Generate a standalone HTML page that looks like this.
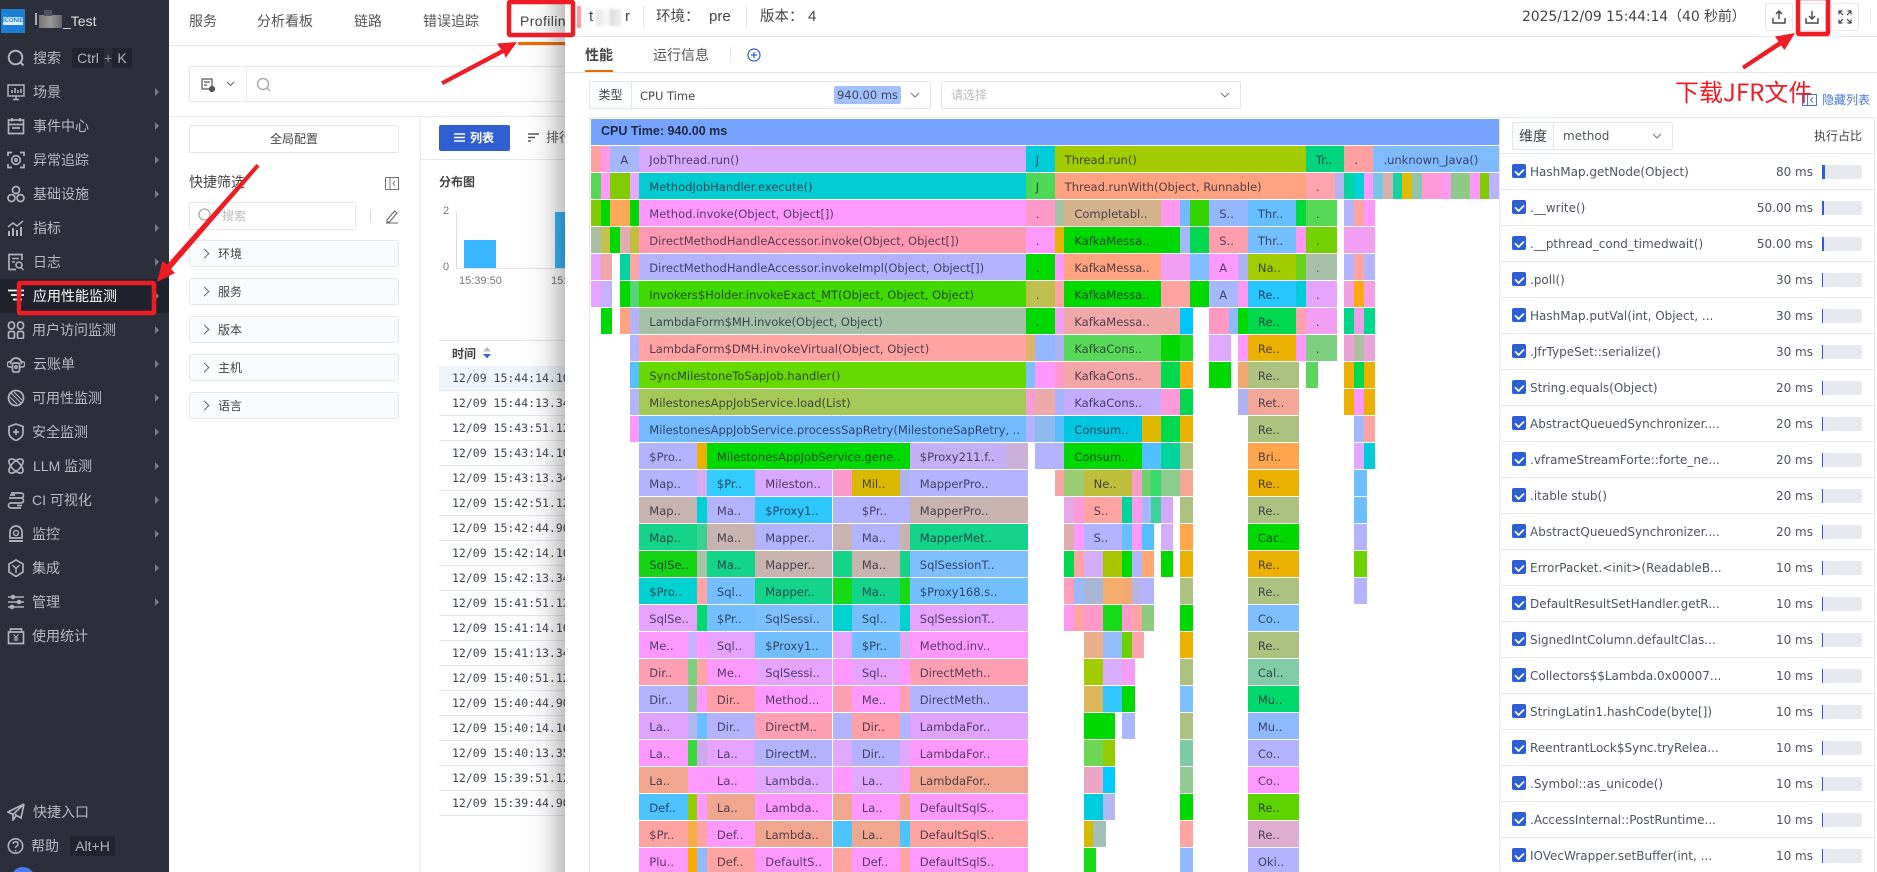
<!DOCTYPE html>
<html lang="zh"><head><meta charset="utf-8"><title>Profiling</title>
<style>
*{box-sizing:border-box}
html,body{margin:0;padding:0;width:1877px;height:872px;overflow:hidden;background:#fff}
body{position:relative;font-family:"Liberation Sans","Noto Sans CJK SC",sans-serif;font-size:12px;color:#444}
.a{position:absolute}
#side{left:0;top:0;width:169px;height:872px;background:#2c2e3a;color:#b8bac0;font-size:14px}
.m{position:absolute;left:0;width:169px;height:20px;line-height:20px;white-space:nowrap}
.m span{position:absolute;left:33px;top:0}
.m svg{position:absolute;left:7px;top:1px;width:18px;height:18px;fill:none;stroke:#b0b2b8;stroke-width:1.5}
.m u{position:absolute;left:155px;top:6px;border-left:4px solid #7a7c84;border-top:4px solid transparent;border-bottom:4px solid transparent}
.k{position:absolute;top:48px;height:20px;line-height:20px;background:#22242d;text-align:center;color:#b0b2b8}
.t{position:absolute;top:12px;font-size:14px;line-height:18px;color:#555}
.fb{position:absolute;left:189px;width:210px;height:27px;background:#fafbfc;border:1px solid #e6e7ec;border-radius:3px;font-size:12px;line-height:26px;padding-left:28px;color:#444}
.fb:before{content:"";position:absolute;left:11px;top:9px;width:6px;height:6px;border-top:1px solid #666;border-right:1px solid #666;transform:rotate(45deg)}
.tr{position:absolute;left:439px;width:126px;height:25px;border-bottom:1px solid #e6e7ec;font:11.5px/25px "DejaVu Sans Mono",monospace;color:#3f4450;padding-left:13px;white-space:nowrap;overflow:hidden}
#dr{left:565px;top:0;width:1312px;height:872px;background:#fff}
.r{position:absolute;left:591px;height:26px;width:908px}
.r b{position:absolute;top:0;height:26px;left:calc(var(--s)*9.66px);width:calc(var(--l)*9.66px);overflow:hidden;white-space:nowrap;padding-left:10px;font:400 11.5px/28px "DejaVu Sans",sans-serif;color:rgba(25,25,50,.75)}
.l{position:absolute;left:1500px;width:374px;height:36px;border-top:1px solid #e8e9ee}
.l em{position:absolute;left:12px;top:10px;width:14px;height:14px;background:#2d5fd3;border-radius:2px}
.l em:after{content:"";position:absolute;left:4px;top:2px;width:5px;height:8px;border-right:2px solid #fff;border-bottom:2px solid #fff;transform:rotate(45deg) scale(.85)}
.l span{position:absolute;left:30px;top:0;font:12px/37px "DejaVu Sans",sans-serif;color:#50535f;white-space:nowrap}
.l s{position:absolute;right:61px;top:0;text-decoration:none;font:12px/37px "DejaVu Sans",sans-serif;color:#50535f}
.l i{position:absolute;left:322px;top:11px;width:40px;height:14px;background:#e8e9ee;border-radius:2px}
.l i:before{content:"";position:absolute;left:0;top:0;height:14px;width:var(--w,1px);background:#2d5fd3}
.ib{position:absolute;top:3px;width:28px;height:28px;border:1px solid #e8e9ee;border-radius:2px}
.ib svg{position:absolute;left:6px;top:6px;width:14px;height:14px;fill:none;stroke:#444;stroke-width:1.4}
</style></head><body>

<!-- main page -->
<div class="a" style="left:169px;top:45px;width:400px;height:1px;background:#e8e9ee"></div>
<div class="t" style="left:189px">服务</div><div class="t" style="left:257px">分析看板</div><div class="t" style="left:354px">链路</div><div class="t" style="left:423px">错误追踪</div><div class="t" style="left:520px;color:#444;font-size:14px;letter-spacing:.4px">Profiling</div>
<div class="a" style="left:518px;top:42px;width:50px;height:3px;background:#f56a00"></div>
<div class="a" style="left:189px;top:66px;width:390px;height:36px;border:1px solid #e8e9ee;border-radius:2px"></div>
<div class="a" style="left:246px;top:66px;width:1px;height:36px;background:#e8e9ee"></div>
<svg class="a" style="left:200px;top:78px" width="16" height="15" fill="none" stroke="#555" stroke-width="1.2"><path d="M2 1h10v10H2zM4 4h6M4 7h3"/><circle cx="12" cy="11" r="2.5" fill="#555"/></svg>
<svg class="a" style="left:226px;top:81px" width="9" height="6" fill="none" stroke="#666"><path d="M1 1l3.5 3.5L8 1"/></svg>
<svg class="a" style="left:256px;top:77px" width="16" height="16" fill="none" stroke="#aaa" stroke-width="1.4"><circle cx="7" cy="7" r="5.5"/><path d="M11 11l3 3"/></svg>
<div class="a" style="left:169px;top:116px;width:400px;height:1px;background:#e8e9ee"></div>
<div class="a" style="left:420px;top:117px;width:1px;height:755px;background:#e8e9ee"></div>
<div class="a" style="left:189px;top:125px;width:210px;height:28px;border:1px solid #e6e7ec;border-radius:2px;text-align:center;line-height:26px;color:#444">全局配置</div>
<div class="a" style="left:189px;top:173px;font-size:14px;line-height:18px;color:#444">快捷筛选</div>
<svg class="a" style="left:385px;top:177px" width="14" height="13" fill="none" stroke="#777"><path d="M.5.5h13v12H.5zM5 .5v12M10 4L8 6.500l2 2.500"/></svg>
<div class="a" style="left:189px;top:202px;width:167px;height:28px;border:1px solid #e6e7ec;border-radius:2px"></div>
<svg class="a" style="left:198px;top:208px" width="15" height="15" fill="none" stroke="#aaa" stroke-width="1.3"><circle cx="6.500" cy="6.500" r="5.500"/><path d="M10.500 10.500l3 3"/></svg>
<div class="a" style="left:222px;top:208px;color:#bbb;line-height:16px">搜索</div>
<div class="a" style="left:370px;top:210px;width:1px;height:12px;background:#ddd"></div>
<svg class="a" style="left:385px;top:209px" width="14" height="15" fill="none" stroke="#666" stroke-width="1.1"><path d="M2 11L9.500 2l2.500 2-7.500 9H2zM1 14h12"/></svg>
<div class="fb" style="top:240px">环境</div><div class="fb" style="top:278px">服务</div><div class="fb" style="top:316px">版本</div><div class="fb" style="top:354px">主机</div><div class="fb" style="top:392px">语言</div>

<div class="a" style="left:439px;top:125px;width:71px;height:26px;background:#2f5fd0;border-radius:2px;color:#fff;font-weight:bold;line-height:26px;padding-left:31px">列表</div>
<svg class="a" style="left:454px;top:132px" width="11" height="11" stroke="#fff" stroke-width="1.4"><path d="M0 2h11M0 5.500h11M0 9h11"/></svg>
<svg class="a" style="left:528px;top:133px" width="12" height="10" stroke="#555" stroke-width="1.6"><path d="M0 1h11M0 4.500h7M0 8h3"/></svg>
<div class="a" style="left:546px;top:130px;line-height:16px;color:#555;font-size:13px">排行</div>
<div class="a" style="left:421px;top:159px;width:148px;height:1px;background:#e8e9ee"></div>
<div class="a" style="left:439px;top:174px;font-weight:bold;line-height:16px;color:#444">分布图</div>
<div class="a" style="left:443px;top:204px;font-size:11px;line-height:14px;color:#777">2</div>
<div class="a" style="left:443px;top:260px;font-size:11px;line-height:14px;color:#777">0</div>
<div class="a" style="left:456px;top:212px;width:1px;height:56px;background:#ddd"></div>
<div class="a" style="left:456px;top:268px;width:110px;height:1px;background:#e6e6ea"></div>
<div class="a" style="left:464px;top:240px;width:32px;height:28px;background:#38b6ff"></div>
<div class="a" style="left:555px;top:212px;width:14px;height:56px;background:#38b6ff"></div>
<div class="a" style="left:459px;top:274px;font-size:11px;line-height:14px;color:#777">15:39:50</div>
<div class="a" style="left:551px;top:274px;font-size:11px;line-height:14px;color:#777">15:</div>
<div class="a" style="left:439px;top:340px;width:130px;height:1px;background:#e6e7ec"></div>
<div class="a" style="left:452px;top:346px;font-weight:bold;line-height:16px;color:#444">时间</div>
<svg class="a" style="left:483px;top:347px" width="8" height="12"><path d="M4 0l4 4.500H0z" fill="#bbb"/><path d="M4 11.500l4-4.500H0z" fill="#3c64d8"/></svg>
<div class="tr" style="top:366px;background:#eff5fb">12/09 15:44:14.105</div>
<div class="tr" style="top:391px">12/09 15:44:13.345</div>
<div class="tr" style="top:416px">12/09 15:43:51.125</div>
<div class="tr" style="top:441px">12/09 15:43:14.105</div>
<div class="tr" style="top:466px">12/09 15:43:13.345</div>
<div class="tr" style="top:491px">12/09 15:42:51.125</div>
<div class="tr" style="top:516px">12/09 15:42:44.905</div>
<div class="tr" style="top:541px">12/09 15:42:14.105</div>
<div class="tr" style="top:566px">12/09 15:42:13.345</div>
<div class="tr" style="top:591px">12/09 15:41:51.125</div>
<div class="tr" style="top:616px">12/09 15:41:14.105</div>
<div class="tr" style="top:641px">12/09 15:41:13.345</div>
<div class="tr" style="top:666px">12/09 15:40:51.125</div>
<div class="tr" style="top:691px">12/09 15:40:44.905</div>
<div class="tr" style="top:716px">12/09 15:40:14.105</div>
<div class="tr" style="top:741px">12/09 15:40:13.355</div>
<div class="tr" style="top:766px">12/09 15:39:51.125</div>
<div class="tr" style="top:791px">12/09 15:39:44.905</div>
<div class="a" style="left:525px;top:0;width:40px;height:872px;background:linear-gradient(to right,rgba(0,0,0,0),rgba(0,0,0,.05) 50%,rgba(0,0,0,.24))"></div>

<!-- sidebar -->
<div id="side" class="a">
<div class="a" style="left:1px;top:9px;width:24px;height:24px;background:#1b80d4"></div>
<div class="a" style="left:3px;top:17px;width:20px;height:8px;background:#dcefff;color:#1b80d4;font:bold 6px/8px 'Liberation Sans';text-align:center">ICONIE</div>
<div class="a" style="left:35px;top:13px;width:2px;height:12px;background:#aaa"></div>
<div class="a" style="left:39px;top:15px;width:23px;height:13px;background:linear-gradient(90deg,#777 0,#999 50%,#666);"></div>
<div class="a" style="left:44px;top:10px;width:8px;height:6px;background:#52525e"></div>
<div class="a" style="left:63px;top:12px;color:#ddd;font-size:14px;line-height:18px">_Test</div>

<div class="m" style="top:48px"><svg viewBox="0 0 18 18"><circle cx="8.500" cy="8.500" r="6.800" stroke-width="2"/><path d="M13.500 13.500l3 3" stroke-width="2"/></svg><span>搜索</span></div>
<div class="k" style="left:72px;width:32px">Ctrl</div><div class="a" style="left:104px;top:48px;line-height:20px;color:#8a8c94">+</div><div class="k" style="left:112px;width:20px">K</div>

<div class="m" style="top:82px"><svg viewBox="0 0 18 18"><path d="M1 2h16v11H1zM6 16.500h6M9 13v3"/><path d="M5 10V7M8 10V5M11 10V7M14 10V6" stroke-width="1.600"/></svg><span>场景</span><u></u></div>
<div class="m" style="top:116px"><svg viewBox="0 0 18 18"><path d="M1.500 3h15v13.500h-15zM5 1v3.500M13 1v3.500M1.500 7.500h15M5 11h8" stroke-width="1.700"/></svg><span>事件中心</span><u></u></div>
<div class="m" style="top:150px"><svg viewBox="0 0 18 18"><path d="M1 5V1.500h4M13 1.500h4V5M17 13v3.500h-4M5 16.500H1V13" stroke-width="1.700"/><circle cx="9" cy="9" r="4.300" stroke-width="1.700"/><circle cx="9" cy="9" r="1.200"/></svg><span>异常追踪</span><u></u></div>
<div class="m" style="top:184px"><svg viewBox="0 0 18 18"><circle cx="9" cy="5" r="3.500" stroke-width="1.700"/><circle cx="4.500" cy="13" r="3.500" stroke-width="1.700"/><circle cx="13.500" cy="13" r="3.500" stroke-width="1.700"/></svg><span>基础设施</span><u></u></div>
<div class="m" style="top:218px"><svg viewBox="0 0 18 18"><path d="M2 17v-5M6 17V9M10 17v-6M14 17V8" stroke-width="2"/><path d="M1 8l5-4 4 3 6-5" /></svg><span>指标</span><u></u></div>
<div class="m" style="top:252px"><svg viewBox="0 0 18 18"><path d="M15 7V1.500H2v15h7" stroke-width="1.700"/><path d="M5 5.500h7M5 9h3"/><circle cx="12" cy="12" r="3" stroke-width="1.600"/><path d="M14 14.500l2.500 2.500"/></svg><span>日志</span><u></u></div>

<div class="a" style="left:0;top:279px;width:169px;height:34px;background:#20222b"></div>
<div class="m" style="top:286px;color:#fff"><svg viewBox="0 0 18 18" style="stroke:#fff"><path d="M1 3.500h16M4 8h6M13 8h4M6 12.500h4M12 12.500h3M10 16h3M11 4v12" stroke-width="1.800"/></svg><span>应用性能监测</span><u style="border-left-color:#888"></u></div>

<div class="m" style="top:320px"><svg viewBox="0 0 18 18"><rect x="1.500" y="1" width="6" height="7" rx="3" stroke-width="1.700"/><rect x="10.500" y="1" width="6" height="7" rx="3" stroke-width="1.700"/><rect x="1.500" y="10.500" width="6" height="7" rx="1.500" stroke-width="1.700"/><rect x="10.500" y="10.500" width="6" height="7" rx="1.500" stroke-width="1.700"/></svg><span style="left:32px">用户访问监测</span><u></u></div>
<div class="m" style="top:354px"><svg viewBox="0 0 18 18"><path d="M3.500 9a5.500 6 0 0 1 11 0" stroke-width="1.700"/><path d="M3.500 6.500H3a2.800 2.800 0 0 0 0 5.600h2M14.500 6.500h.5a2.800 2.800 0 0 1 0 5.600h-2" stroke-width="1.600"/><rect x="5.500" y="8" width="7" height="9" rx="1.500" stroke-width="1.700"/><circle cx="9" cy="12" r="1.200"/></svg><span>云账单</span><u></u></div>
<div class="m" style="top:388px"><svg viewBox="0 0 18 18"><circle cx="9" cy="9" r="7.500" stroke-width="1.800"/><path d="M4 4l10 10M3 8l7 7M7 3l8 8" stroke-width="1.200"/></svg><span style="left:32px">可用性监测</span><u></u></div>
<div class="m" style="top:422px"><svg viewBox="0 0 18 18"><path d="M9 1l7 2.500V10c0 3.500-3.500 6-7 7.500C5.500 16 2 13.500 2 10V3.500z" stroke-width="1.700"/><path d="M6 9h6M9 6v6" stroke-width="1.700"/></svg><span style="left:32px">安全监测</span><u></u></div>
<div class="m" style="top:456px"><svg viewBox="0 0 18 18"><ellipse cx="9" cy="9" rx="9" ry="4.300" transform="rotate(45 9 9)" stroke-width="1.700"/><ellipse cx="9" cy="9" rx="9" ry="4.300" transform="rotate(-45 9 9)" stroke-width="1.700"/></svg><span>LLM 监测</span><u></u></div>
<div class="m" style="top:490px"><svg viewBox="0 0 18 18"><path d="M4 2h10a2.500 2.500 0 0 1 0 5H4M2 7h12M14 7a2.500 2.500 0 0 1 0 5H4a2.500 2.500 0 0 0 0 5h10" stroke-width="1.700"/><path d="M3 4h5M10 14.500h5" stroke-width="1.700"/></svg><span style="left:32px">CI 可视化</span><u></u></div>
<div class="m" style="top:524px"><svg viewBox="0 0 18 18"><path d="M3 13V7a6 6 0 0 1 12 0v6z" stroke-width="1.700"/><circle cx="9" cy="8" r="2.500" stroke-width="1.400"/><path d="M2 16h14" stroke-width="2"/></svg><span style="left:32px">监控</span><u></u></div>
<div class="m" style="top:558px"><svg viewBox="0 0 18 18"><path d="M9 1l7 4v8l-7 4.500L2 13V5z" stroke-width="1.700"/><path d="M5.500 6L9 9.500 12.500 6M9 9.500V14" stroke-width="1.500"/></svg><span style="left:32px">集成</span><u></u></div>
<div class="m" style="top:592px"><svg viewBox="0 0 18 18"><path d="M1 4h16M1 9h16M1 14h16" stroke-width="1.500"/><circle cx="6" cy="4" r="1.500" fill="#b0b2b8"/><circle cx="12" cy="9" r="1.500" fill="#b0b2b8"/><circle cx="5" cy="14" r="1.500" fill="#b0b2b8"/></svg><span style="left:32px">管理</span><u></u></div>
<div class="m" style="top:626px"><svg viewBox="0 0 18 18"><path d="M1.500 5h15v11.500h-15zM3.500 5V2h11v3" stroke-width="1.700"/><path d="M6.500 7.500L9 10l2.500-2.500M9 10v4M6.500 11h5M6.500 13h5" stroke-width="1"/></svg><span style="left:32px">使用统计</span></div>

<div class="m" style="top:802px"><svg viewBox="0 0 18 18"><path d="M17 1L1 9l5 2.500L17 1zM17 1l-3 14-6-3.500M6 11.500V17l3-4" stroke-width="1.700"/></svg><span>快捷入口</span></div>
<div class="m" style="top:836px"><svg viewBox="0 0 18 18"><circle cx="8.500" cy="9" r="7.200" stroke-width="1.600"/><path d="M6.200 7a2.400 2.400 0 1 1 3.600 2.100c-.9.500-1.300 1-1.300 2" stroke-width="1.500"/><path d="M8.500 13v1.400" stroke-width="1.500"/></svg><span style="left:31px">帮助</span></div>
<div class="k" style="left:70px;top:836px;width:45px">Alt+H</div>
<div class="a" style="left:11px;top:867px;width:24px;height:24px;border-radius:12px;background:#4a7cf0"></div>
</div>

<!-- drawer -->
<div id="dr" class="a"></div>
<div class="a" style="left:577px;top:6px;width:4px;height:22px;background:#ff9e9e"></div>
<div class="a" style="left:589px;top:8px;font-size:15px;line-height:18px;color:#444">t</div>
<div class="a" style="left:596px;top:9px;width:26px;height:17px;background:linear-gradient(90deg,#e6e6e6,#fafafa 45%,#dedede 60%,#f3f3f3);filter:blur(1px)"></div>
<div class="a" style="left:625px;top:8px;font-size:15px;line-height:18px;color:#444">r</div>
<div class="a" style="left:643px;top:6px;width:1px;height:22px;background:#e6e7ec"></div>
<div class="a" style="left:656px;top:8px;font-size:14.500px;line-height:18px;color:#444">环境：</div>
<div class="a" style="left:709px;top:8px;font-size:15px;line-height:18px;color:#444">pre</div>
<div class="a" style="left:746px;top:6px;width:1px;height:22px;background:#e6e7ec"></div>
<div class="a" style="left:760px;top:8px;font-size:14.500px;line-height:18px;color:#444">版本：</div>
<div class="a" style="left:808px;top:8px;font-size:15px;line-height:18px;color:#444">4</div>
<div class="a" style="left:1522px;top:8px;font:14px/18px 'DejaVu Sans','Noto Sans CJK SC',sans-serif;letter-spacing:-.1px;color:#444;white-space:nowrap">2025/12/09 15:44:14（40 秒前）</div>
<div class="ib" style="left:1765px"><svg viewBox="0 0 14 14"><path d="M1 8v5h12V8M7 9V1M4 4l3-3 3 3"/></svg></div>
<div class="ib" style="left:1798px"><svg viewBox="0 0 14 14"><path d="M1 8v5h12V8M7 1v8M4 6l3 3 3-3"/></svg></div>
<div class="ib" style="left:1831px"><svg viewBox="0 0 14 14"><path d="M1 4.500V1h3.500M13 4.500V1H9.500M1 9.500V13h3.500M13 9.500V13H9.500M1 1l4 4M13 1L9 5M1 13l4-4M13 13L9 9" stroke-width="1.200"/></svg></div>
<div class="a" style="left:1870px;top:8px;width:1px;height:16px;background:#e8e9ee"></div>
<div class="a" style="left:565px;top:36px;width:1312px;height:1px;background:#e6e7ec"></div>
<div class="a" style="left:585px;top:46px;font-size:14px;line-height:18px;font-weight:bold;color:#444">性能</div>
<div class="a" style="left:653px;top:46px;font-size:14px;line-height:18px;color:#555">运行信息</div>
<div class="a" style="left:730px;top:47px;width:1px;height:16px;background:#e6e7ec"></div>
<svg class="a" style="left:747px;top:48px" width="14" height="14" fill="none" stroke="#2d5fd3" stroke-width="1.200"><circle cx="7" cy="7" r="6"/><path d="M4 7h6M7 4v6"/></svg>
<div class="a" style="left:585px;top:70px;width:28px;height:2px;background:#f56a00"></div>
<div class="a" style="left:565px;top:72px;width:1312px;height:1px;background:#e6e7ec"></div>

<div class="a" style="left:589px;top:81px;width:342px;height:28px;border:1px solid #e6e7ec;border-radius:2px"></div>
<div class="a" style="left:589px;top:81px;width:43px;height:28px;border:1px solid #e6e7ec;background:#fafbfc;text-align:center;line-height:26px;color:#444">类型</div>
<div class="a" style="left:640px;top:87px;font:11.500px/18px 'DejaVu Sans',sans-serif;color:#444">CPU Time</div>
<div class="a" style="left:834px;top:86px;width:67px;height:18px;background:#a3c0ff;border-radius:2px;text-align:center;font:11.500px/19px 'DejaVu Sans',sans-serif;color:#445">940.00 ms</div>
<svg class="a" style="left:910px;top:92px" width="10" height="7" fill="none" stroke="#778" stroke-width="1.100"><path d="M1 1l4 4 4-4"/></svg>
<div class="a" style="left:941px;top:81px;width:300px;height:28px;border:1px solid #e6e7ec;border-radius:2px;padding-left:9px;line-height:26px;color:#bbb">请选择</div>
<svg class="a" style="left:1220px;top:92px" width="10" height="7" fill="none" stroke="#778" stroke-width="1.100"><path d="M1 1l4 4 4-4"/></svg>

<svg class="a" style="left:1802px;top:94px" width="15" height="12" fill="none" stroke="#4a74d9"><path d="M.5.5h14v11H.5zM5.500.5v11M11 3.500L8.500 6l2.500 2.500"/></svg>
<div class="a" style="left:1822px;top:92px;color:#4a74d9;line-height:16px">隐藏列表</div>

<div class="a" style="left:589px;top:117px;width:1286px;height:755px;border:1px solid #e8e9ee;border-bottom:0"></div>
<div class="a" style="left:591px;top:119px;width:908px;height:26px;background:#76a3ff;color:#222a44;font:bold 12.500px/25px 'Liberation Sans',sans-serif;padding-left:10px">CPU Time: 940.00 ms</div>

<div class="r" style="top:146px"><b style="--s:0;--l:1;background:#ffa0a0"></b><b style="--s:1;--l:1;background:#ff99e6"></b><b style="--s:2;--l:3;background:#a3b8ff">A</b><b style="--s:5;--l:40;background:#d9a8ff">JobThread.run()</b><b style="--s:45;--l:3;background:#00ccd9">J</b><b style="--s:48;--l:26;background:#a3cc00">Thread.run()</b><b style="--s:74;--l:4;background:#00d47f">Tr..</b><b style="--s:78;--l:3;background:#ffa0a0">.</b><b style="--s:81;--l:13;background:#80bbff">.unknown_Java()</b></div>

<div class="r" style="top:173px"><b style="--s:0;--l:1;background:#55d955"></b><b style="--s:1;--l:1;background:#ff99ff"></b><b style="--s:2;--l:2;background:#80cc00"></b><b style="--s:4;--l:1;background:#e5a8ff"></b><b style="--s:5;--l:40;background:#00ccd1">MethodJobHandler.execute()</b><b style="--s:45;--l:3;background:#4dd957">J</b><b style="--s:48;--l:26;background:#ffa380">Thread.runWith(Object, Runnable)</b><b style="--s:74;--l:3;background:#ffa3ad">.</b><b style="--s:77;--l:1;background:#b3b3f0"></b><b style="--s:78;--l:1;background:#00d4a0"></b><b style="--s:79;--l:1;background:#00d4d9"></b><b style="--s:80;--l:1;background:#ff99ff"></b><b style="--s:81;--l:1;background:#73c6e6"></b><b style="--s:82;--l:1;background:#d9b0ad"></b><b style="--s:83;--l:1;background:#14d4a3"></b><b style="--s:84;--l:1;background:#e0bb00"></b><b style="--s:85;--l:1;background:#8fc4ad"></b><b style="--s:86;--l:2;background:#ff99d9"></b><b style="--s:88;--l:1;background:#ff99f0"></b><b style="--s:89;--l:1;background:#8fc88f"></b><b style="--s:90;--l:1;background:#8fcc80"></b><b style="--s:91;--l:1;background:#ff99ff"></b><b style="--s:92;--l:1;background:#80cc00"></b><b style="--s:93;--l:1;background:#b8b3ff"></b></div>

<div class="r" style="top:200px"><b style="--s:0;--l:1;background:#80cc00"></b><b style="--s:1;--l:1;background:#00d900"></b><b style="--s:2;--l:2;background:#ffa857"></b><b style="--s:4;--l:1;background:#00d900"></b><b style="--s:5;--l:40;background:#ff99ff">Method.invoke(Object, Object[])</b><b style="--s:45;--l:3;background:#ff99cc">.</b><b style="--s:48;--l:1;background:#a3c4a3"></b><b style="--s:49;--l:10;background:#d4b38c">Completabl..</b><b style="--s:59;--l:2;background:#ff99f0"></b><b style="--s:61;--l:1;background:#73bbff"></b><b style="--s:62;--l:2;background:#33d400"></b><b style="--s:64;--l:4;background:#94b8ff">S..</b><b style="--s:68;--l:5;background:#66bfff">Thr..</b><b style="--s:73;--l:1;background:#00d93a"></b><b style="--s:74;--l:3.260;background:#55d955">.</b><b style="--s:78;--l:1;background:#b3b3ff"></b><b style="--s:79;--l:1;background:#ffa3a3"></b><b style="--s:80;--l:1.200;background:#ff99ff"></b></div>

<div class="r" style="top:227px"><b style="--s:0;--l:1;background:#adbfa3"></b><b style="--s:1;--l:1;background:#c2c24d"></b><b style="--s:2;--l:1;background:#00d900"></b><b style="--s:3;--l:1;background:#e0adb3"></b><b style="--s:4;--l:1;background:#bfbf3d"></b><b style="--s:5;--l:40;background:#ff99b3">DirectMethodHandleAccessor.invoke(Object, Object[])</b><b style="--s:45;--l:3;background:#ff99ff">.</b><b style="--s:48;--l:1;background:#e6b300"></b><b style="--s:49;--l:12;background:#00d900">KafkaMessa..</b><b style="--s:61;--l:1;background:#a3b8ff"></b><b style="--s:62;--l:2;background:#00d94d"></b><b style="--s:64;--l:4;background:#ff9fae">S..</b><b style="--s:68;--l:5;background:#73bfff">Thr..</b><b style="--s:73;--l:1;background:#ff99f0"></b><b style="--s:74;--l:3.260;background:#73d100">.</b><b style="--s:78;--l:3.200;background:#f29ef2"></b></div>

<div class="r" style="top:254px"><b style="--s:0;--l:1;background:#e6a3ff"></b><b style="--s:1;--l:1.200;background:#f0a8a8"></b><b style="--s:3;--l:1;background:#00d49c"></b><b style="--s:4;--l:1;background:#ffa3a3"></b><b style="--s:5;--l:40;background:#b3b3ff">DirectMethodHandleAccessor.invokeImpl(Object, Object[])</b><b style="--s:45;--l:3;background:#00d900">.</b><b style="--s:48;--l:1;background:#ff99ff"></b><b style="--s:49;--l:10;background:#ffa380">KafkaMessa..</b><b style="--s:59;--l:3;background:#f29ef2"></b><b style="--s:62;--l:2;background:#80bfff"></b><b style="--s:64;--l:3;background:#ff99ff">A</b><b style="--s:67;--l:1;background:#adb3f0"></b><b style="--s:68;--l:5;background:#a3cc00">Na..</b><b style="--s:73;--l:1;background:#66d11f"></b><b style="--s:74;--l:3.260;background:#a8bfa8">.</b><b style="--s:78;--l:1;background:#b3b3ff"></b><b style="--s:79;--l:1;background:#ffa3a3"></b><b style="--s:80;--l:1.200;background:#b3b3ff"></b></div>

<div class="r" style="top:281px"><b style="--s:0;--l:1;background:#e6a3ff"></b><b style="--s:1;--l:1.200;background:#c4b0ff"></b><b style="--s:3;--l:1;background:#00d900"></b><b style="--s:4;--l:1;background:#57d473"></b><b style="--s:5;--l:40;background:#40d900">Invokers$Holder.invokeExact_MT(Object, Object, Object)</b><b style="--s:45;--l:3;background:#bfbf4d">.</b><b style="--s:48;--l:1;background:#ffa3a3"></b><b style="--s:49;--l:10;background:#00d900">KafkaMessa..</b><b style="--s:59;--l:3;background:#ffa3a3"></b><b style="--s:62;--l:2;background:#00d900"></b><b style="--s:64;--l:3;background:#a8b8ff">A</b><b style="--s:67;--l:1;background:#ff99f0"></b><b style="--s:68;--l:5;background:#26c6ff">Re..</b><b style="--s:73;--l:1;background:#00ccd9"></b><b style="--s:74;--l:3.260;background:#e6a3ff">.</b><b style="--s:78;--l:1;background:#f0a0e0"></b><b style="--s:79;--l:1;background:#ffaa14"></b><b style="--s:80;--l:1.200;background:#f5a0e6"></b></div>

<div class="r" style="top:308px"><b style="--s:1;--l:1.200;background:#00d900"></b><b style="--s:3;--l:1;background:#ffa380"></b><b style="--s:4;--l:1;background:#b3b3ff"></b><b style="--s:5;--l:40;background:#a6c2a6">LambdaForm$MH.invoke(Object, Object)</b><b style="--s:45;--l:3;background:#00d900">.</b><b style="--s:48;--l:1;background:#f29ef2"></b><b style="--s:49;--l:12;background:#f0a8a8">KafkaMessa..</b><b style="--s:61;--l:1.280;background:#00c6ff"></b><b style="--s:64;--l:2;background:#ff99c4"></b><b style="--s:66;--l:1;background:#8fbaff"></b><b style="--s:67;--l:1;background:#00d900"></b><b style="--s:68;--l:5;background:#00d94d">Re..</b><b style="--s:73;--l:1;background:#ff9fb0"></b><b style="--s:74;--l:3.260;background:#f29ef2">.</b><b style="--s:78;--l:1;background:#00d48c"></b><b style="--s:79;--l:1;background:#eb9ee6"></b><b style="--s:80;--l:1.200;background:#00d98c"></b></div>

<div class="r" style="top:335px"><b style="--s:4;--l:1;background:#b3b3ff"></b><b style="--s:5;--l:40;background:#ffa3a3">LambdaForm$DMH.invokeVirtual(Object, Object)</b><b style="--s:45;--l:1;background:#e0b36b"></b><b style="--s:46;--l:2;background:#94b8ff"></b><b style="--s:48;--l:1;background:#adb3f0"></b><b style="--s:49;--l:10;background:#57d957">KafkaCons..</b><b style="--s:59;--l:2;background:#00d900"></b><b style="--s:61;--l:1.280;background:#1fd926"></b><b style="--s:64;--l:2.280;background:#e0a8ff"></b><b style="--s:67;--l:1;background:#ff99ff"></b><b style="--s:68;--l:5;background:#ebb000">Re..</b><b style="--s:73;--l:1;background:#ff99ff"></b><b style="--s:74;--l:3.260;background:#7dcf80">.</b><b style="--s:78;--l:1;background:#e8a3d4"></b><b style="--s:79;--l:1;background:#adbfa0"></b><b style="--s:80;--l:1.200;background:#e8a3d9"></b></div>

<div class="r" style="top:362px"><b style="--s:4;--l:1;background:#57bfff"></b><b style="--s:5;--l:40;background:#66d900">SyncMilestoneToSapJob.handler()</b><b style="--s:45;--l:1;background:#7dbfff"></b><b style="--s:46;--l:2;background:#ff99ff"></b><b style="--s:48;--l:1;background:#ff99cc"></b><b style="--s:49;--l:10;background:#f5a6a6">KafkaCons..</b><b style="--s:59;--l:2;background:#00d94d"></b><b style="--s:61;--l:1.280;background:#ffa814"></b><b style="--s:64;--l:2.280;background:#00d900"></b><b style="--s:67;--l:1;background:#f2a873"></b><b style="--s:68;--l:5.300;background:#adc280">Re..</b><b style="--s:74;--l:1.300;background:#5dd45d"></b><b style="--s:78;--l:1;background:#ebb000"></b><b style="--s:79;--l:1;background:#00d94d"></b><b style="--s:80;--l:1.200;background:#ebb000"></b></div>

<div class="r" style="top:389px"><b style="--s:4;--l:1;background:#b3b3ff"></b><b style="--s:5;--l:40;background:#a3c957">MilestonesAppJobService.load(List)</b><b style="--s:45;--l:1;background:#f59ed4"></b><b style="--s:46;--l:2;background:#eda8a8"></b><b style="--s:48;--l:1;background:#a8b3ff"></b><b style="--s:49;--l:10;background:#c4adff">KafkaCons..</b><b style="--s:59;--l:2;background:#ff99d9"></b><b style="--s:61;--l:1.280;background:#00d94d"></b><b style="--s:67;--l:1;background:#adb3f0"></b><b style="--s:68;--l:5.300;background:#f5a898">Ret..</b><b style="--s:78;--l:1;background:#ebb000"></b><b style="--s:79;--l:1;background:#ff99ff"></b><b style="--s:80;--l:1.200;background:#ebb000"></b></div>

<div class="r" style="top:416px"><b style="--s:4;--l:1;background:#ff99ff"></b><b style="--s:5;--l:40;background:#73bbff">MilestonesAppJobService.processSapRetry(MilestoneSapRetry, ..</b><b style="--s:45;--l:1;background:#b3b3ff"></b><b style="--s:46;--l:2;background:#8fbaf0"></b><b style="--s:48;--l:1;background:#57bfff"></b><b style="--s:49;--l:8;background:#00c6e0">Consum..</b><b style="--s:57;--l:2;background:#e0b800"></b><b style="--s:59;--l:2;background:#00d94d"></b><b style="--s:61;--l:1.280;background:#ebb000"></b><b style="--s:68;--l:5.300;background:#adc280">Re..</b><b style="--s:79;--l:1;background:#a3b8ff"></b><b style="--s:80;--l:1.200;background:#ffa3a3"></b></div>

<div class="r" style="top:443px"><b style="--s:5;--l:6;background:#b3b3ff">$Pro..</b><b style="--s:11;--l:1;background:#ebb000"></b><b style="--s:12;--l:21;background:#00d900">MilestonesAppJobService.gene..</b><b style="--s:33;--l:10;background:#c4b0f5">$Proxy211.f..</b><b style="--s:43;--l:2.200;background:#cbb0d9"></b><b style="--s:46;--l:3;background:#b3b3ff"></b><b style="--s:49;--l:8;background:#00d900">Consum..</b><b style="--s:57;--l:2;background:#52bfff"></b><b style="--s:59;--l:2;background:#00d49c"></b><b style="--s:61;--l:1.280;background:#adc280"></b><b style="--s:68;--l:5.300;background:#ffa64d">Bri..</b><b style="--s:79;--l:1;background:#e0a8ff"></b><b style="--s:80;--l:1.200;background:#00ccd9"></b></div>

<div class="r" style="top:470px"><b style="--s:5;--l:6;background:#b3b3ff">Map..</b><b style="--s:11;--l:1;background:#d4adf5"></b><b style="--s:12;--l:5;background:#33ccff">$Pr..</b><b style="--s:17;--l:8;background:#d9a8ff">Mileston..</b><b style="--s:25;--l:2;background:#ff99cc"></b><b style="--s:27;--l:5;background:#d9b800">Mil..</b><b style="--s:32;--l:1;background:#adb3f0"></b><b style="--s:33;--l:12.200;background:#b3b3ff">MapperPro..</b><b style="--s:48;--l:1;background:#f5a6a6"></b><b style="--s:49;--l:2;background:#99cc73"></b><b style="--s:51;--l:5;background:#bfbf3d">Ne..</b><b style="--s:56;--l:1;background:#f59ec8"></b><b style="--s:57;--l:1;background:#6dd16d"></b><b style="--s:58;--l:1;background:#38d96b"></b><b style="--s:59;--l:2;background:#8ccc8c"></b><b style="--s:61;--l:1.280;background:#f5a898"></b><b style="--s:68;--l:5.300;background:#ebb000">Re..</b><b style="--s:79;--l:1.300;background:#6dbfff"></b></div>

<div class="r" style="top:497px"><b style="--s:5;--l:6;background:#c9b3b0">Map..</b><b style="--s:11;--l:1;background:#00d1d9"></b><b style="--s:12;--l:5;background:#b3b3ff">Ma..</b><b style="--s:17;--l:8;background:#2ec8ff">$Proxy1..</b><b style="--s:25;--l:2;background:#b3b3ff"></b><b style="--s:27;--l:5;background:#b3b3ff">$Pr..</b><b style="--s:32;--l:1;background:#b3b3ff"></b><b style="--s:33;--l:12.200;background:#c9b3b0">MapperPro..</b><b style="--s:49;--l:1;background:#e6a8e6"></b><b style="--s:50;--l:1;background:#ff99d9"></b><b style="--s:51;--l:4;background:#ffa3a3">S..</b><b style="--s:55;--l:1;background:#00d49c"></b><b style="--s:56;--l:1;background:#ff99ee"></b><b style="--s:57;--l:1;background:#a3b8ff"></b><b style="--s:58;--l:1;background:#3dd19c"></b><b style="--s:59;--l:1.280;background:#d4a8ff"></b><b style="--s:61;--l:1.280;background:#adc280"></b><b style="--s:68;--l:5.300;background:#adc280">Re..</b><b style="--s:79;--l:1.300;background:#6dbfff"></b></div>

<div class="r" style="top:524px"><b style="--s:5;--l:6;background:#14d48c">Map..</b><b style="--s:11;--l:1;background:#3dd194"></b><b style="--s:12;--l:5;background:#c9b3b0">Ma..</b><b style="--s:17;--l:8;background:#b3b3ff">Mapper..</b><b style="--s:25;--l:2;background:#c9b3b0"></b><b style="--s:27;--l:5;background:#b3b3ff">Ma..</b><b style="--s:32;--l:1;background:#c9b3b0"></b><b style="--s:33;--l:12.200;background:#14d48c">MapperMet..</b><b style="--s:49;--l:1;background:#e0adad"></b><b style="--s:50;--l:1;background:#ff99ff"></b><b style="--s:51;--l:4;background:#b3b3ff">S..</b><b style="--s:55;--l:1;background:#66bfff"></b><b style="--s:56;--l:1;background:#ff99ff"></b><b style="--s:57;--l:1.280;background:#52bfff"></b><b style="--s:59;--l:1.280;background:#d4adff"></b><b style="--s:61;--l:1.280;background:#ffa64d"></b><b style="--s:68;--l:5.300;background:#00d900">Cac..</b><b style="--s:79;--l:1.300;background:#b3b3ff"></b></div>

<div class="r" style="top:551px"><b style="--s:5;--l:6;background:#14d414">SqlSe..</b><b style="--s:11;--l:1;background:#a8c4a8"></b><b style="--s:12;--l:5;background:#14d48c">Ma..</b><b style="--s:17;--l:8;background:#c9b3b0">Mapper..</b><b style="--s:25;--l:2;background:#14d48c"></b><b style="--s:27;--l:5;background:#c9b3b0">Ma..</b><b style="--s:32;--l:1;background:#14d48c"></b><b style="--s:33;--l:12.200;background:#7dbfff">SqlSessionT..</b><b style="--s:49;--l:1;background:#00d94d"></b><b style="--s:50;--l:1;background:#ffa3a3"></b><b style="--s:51;--l:2;background:#d4adff"></b><b style="--s:53;--l:2;background:#a8c400"></b><b style="--s:55;--l:1;background:#00d900"></b><b style="--s:56;--l:1;background:#b3b3ff"></b><b style="--s:57;--l:1.280;background:#ffa673"></b><b style="--s:59;--l:1.280;background:#00d900"></b><b style="--s:61;--l:1.280;background:#ebb000"></b><b style="--s:68;--l:5.300;background:#ebb000">Re..</b><b style="--s:79;--l:1.300;background:#6dd100"></b></div>

<div class="r" style="top:578px"><b style="--s:5;--l:6;background:#00d1d1">$Pro..</b><b style="--s:11;--l:1;background:#ffa3a3"></b><b style="--s:12;--l:5;background:#73bfff">Sql..</b><b style="--s:17;--l:8;background:#14d48c">Mapper..</b><b style="--s:25;--l:2;background:#14d914"></b><b style="--s:27;--l:5;background:#14d48c">Ma..</b><b style="--s:32;--l:1;background:#14d914"></b><b style="--s:33;--l:12.200;background:#73bfff">$Proxy168.s..</b><b style="--s:49;--l:1;background:#ff9fbb"></b><b style="--s:50;--l:1;background:#9cb8ff"></b><b style="--s:51;--l:2;background:#a8b8d4"></b><b style="--s:53;--l:2;background:#f5ad6b"></b><b style="--s:55;--l:1;background:#f2a873"></b><b style="--s:56;--l:1;background:#b8b3e6"></b><b style="--s:57;--l:1.280;background:#b3b3ff"></b><b style="--s:61;--l:1.280;background:#adc280"></b><b style="--s:68;--l:5.300;background:#adc280">Re..</b><b style="--s:79;--l:1.300;background:#b3b3ff"></b></div>

<div class="r" style="top:605px"><b style="--s:5;--l:6;background:#e6a3ff">SqlSe..</b><b style="--s:11;--l:1;background:#00d96b"></b><b style="--s:12;--l:5;background:#73bfff">$Pr..</b><b style="--s:17;--l:8;background:#7dbfff">SqlSessi..</b><b style="--s:25;--l:2;background:#00d1d1"></b><b style="--s:27;--l:5;background:#73bfff">Sql..</b><b style="--s:32;--l:1;background:#00d1d1"></b><b style="--s:33;--l:12.200;background:#e6a3ff">SqlSessionT..</b><b style="--s:49;--l:1;background:#ff99f0"></b><b style="--s:50;--l:1;background:#ffa3a3"></b><b style="--s:51;--l:2;background:#ff99cc"></b><b style="--s:53;--l:2;background:#1adb1a"></b><b style="--s:55;--l:1;background:#ff99cc"></b><b style="--s:56;--l:1;background:#ffa3a3"></b><b style="--s:57;--l:1.280;background:#8ccc80"></b><b style="--s:61;--l:1.280;background:#00d900"></b><b style="--s:68;--l:5.300;background:#7dbfff">Co..</b></div>

<div class="r" style="top:632px"><b style="--s:5;--l:5;background:#ff99ff">Me..</b><b style="--s:10;--l:1;background:#c9b0ff"></b><b style="--s:11;--l:1;background:#ff99ff"></b><b style="--s:12;--l:5;background:#e6a3ff">Sql..</b><b style="--s:17;--l:8;background:#73bfff">$Proxy1..</b><b style="--s:25;--l:2;background:#e6a3ff"></b><b style="--s:27;--l:5;background:#73bfff">$Pr..</b><b style="--s:32;--l:1;background:#e0a8f0"></b><b style="--s:33;--l:12.200;background:#ff99ff">Method.inv..</b><b style="--s:51;--l:2;background:#ebad8c"></b><b style="--s:53;--l:2;background:#94bdf7"></b><b style="--s:55;--l:1;background:#6dd100"></b><b style="--s:56;--l:1.280;background:#ffa3ad"></b><b style="--s:61;--l:1.280;background:#ebb000"></b><b style="--s:68;--l:5.300;background:#adc280">Re..</b></div>

<div class="r" style="top:659px"><b style="--s:5;--l:5;background:#ff9fb3">Dir..</b><b style="--s:10;--l:1;background:#7dcf80"></b><b style="--s:11;--l:1;background:#ffa3a3"></b><b style="--s:12;--l:5;background:#ff99ff">Me..</b><b style="--s:17;--l:8;background:#e6a3ff">SqlSessi..</b><b style="--s:25;--l:2;background:#ff99ff"></b><b style="--s:27;--l:5;background:#e6a3ff">Sql..</b><b style="--s:32;--l:1;background:#ff99ff"></b><b style="--s:33;--l:12.200;background:#ff9fb3">DirectMeth..</b><b style="--s:51;--l:2;background:#a3cc00"></b><b style="--s:53;--l:2;background:#d9adff"></b><b style="--s:55;--l:1.300;background:#f59ef5"></b><b style="--s:61;--l:1.280;background:#adc280"></b><b style="--s:68;--l:5.300;background:#80cca6">Cal..</b></div>

<div class="r" style="top:686px"><b style="--s:5;--l:5;background:#b3b3ff">Dir..</b><b style="--s:10;--l:1;background:#94c494"></b><b style="--s:11;--l:1;background:#ff99ff"></b><b style="--s:12;--l:5;background:#ff9fa8">Dir..</b><b style="--s:17;--l:8;background:#ff99ff">Method...</b><b style="--s:25;--l:2;background:#ff9fb3"></b><b style="--s:27;--l:5;background:#ff99ff">Me..</b><b style="--s:32;--l:1;background:#ff9fb3"></b><b style="--s:33;--l:12.200;background:#b3b3ff">DirectMeth..</b><b style="--s:51;--l:2;background:#dbb85c"></b><b style="--s:53;--l:2;background:#33c6ff"></b><b style="--s:55;--l:1.300;background:#00d900"></b><b style="--s:61;--l:1.280;background:#7dbfff"></b><b style="--s:68;--l:5.300;background:#00d96b">Mu..</b></div>

<div class="r" style="top:713px"><b style="--s:5;--l:5;background:#e0a3ff">La..</b><b style="--s:10;--l:1;background:#b3b3f0"></b><b style="--s:11;--l:1;background:#66bfff"></b><b style="--s:12;--l:5;background:#b3b3ff">Dir..</b><b style="--s:17;--l:8;background:#ff9fb3">DirectM..</b><b style="--s:25;--l:2;background:#b3b3ff"></b><b style="--s:27;--l:5;background:#ff9fa8">Dir..</b><b style="--s:32;--l:1;background:#b3b3ff"></b><b style="--s:33;--l:12.200;background:#e0a3ff">LambdaFor..</b><b style="--s:51;--l:3.280;background:#00d900"></b><b style="--s:55;--l:1.300;background:#a8b8ff"></b><b style="--s:61;--l:1.280;background:#adc280"></b><b style="--s:68;--l:5.300;background:#8fbaff">Mu..</b></div>

<div class="r" style="top:740px"><b style="--s:5;--l:5;background:#ff99ff">La..</b><b style="--s:10;--l:1;background:#38d938"></b><b style="--s:11;--l:1;background:#cfa8f0"></b><b style="--s:12;--l:5;background:#e6a3ff">La..</b><b style="--s:17;--l:8;background:#b3b3ff">DirectM..</b><b style="--s:25;--l:2;background:#e0a8ff"></b><b style="--s:27;--l:5;background:#b3b3ff">Dir..</b><b style="--s:32;--l:1;background:#e0a8ff"></b><b style="--s:33;--l:12.200;background:#ff99ff">LambdaFor..</b><b style="--s:51;--l:2;background:#6dd655"></b><b style="--s:53;--l:1.280;background:#94cc00"></b><b style="--s:61;--l:1.280;background:#7dc9a6"></b><b style="--s:68;--l:5.300;background:#b3b3ff">Co..</b></div>

<div class="r" style="top:767px"><b style="--s:5;--l:5;background:#f0a68f">La..</b><b style="--s:10;--l:2;background:#ff99ff"></b><b style="--s:12;--l:5;background:#ff99ff">La..</b><b style="--s:17;--l:8;background:#e0a8ff">Lambda..</b><b style="--s:25;--l:2;background:#ff99ff"></b><b style="--s:27;--l:5;background:#e0a8ff">La..</b><b style="--s:32;--l:1;background:#ff99ff"></b><b style="--s:33;--l:12.200;background:#f0a68f">LambdaFor..</b><b style="--s:51;--l:2;background:#eba6c4"></b><b style="--s:53;--l:1.280;background:#00ccff"></b><b style="--s:61;--l:1.280;background:#94c994"></b><b style="--s:68;--l:5.300;background:#ff99ff">Co..</b></div>

<div class="r" style="top:794px"><b style="--s:5;--l:5;background:#4dc4ff">Def..</b><b style="--s:10;--l:1;background:#94cc00"></b><b style="--s:11;--l:1;background:#ff99ff"></b><b style="--s:12;--l:5;background:#f0a68f">La..</b><b style="--s:17;--l:8;background:#ff99ff">Lambda..</b><b style="--s:25;--l:2;background:#f0a68f"></b><b style="--s:27;--l:5;background:#ff99ff">La..</b><b style="--s:32;--l:1;background:#f0a68f"></b><b style="--s:33;--l:12.200;background:#ff99ff">DefaultSqlS..</b><b style="--s:51;--l:2;background:#00ccdf"></b><b style="--s:53;--l:1.280;background:#b3b8f0"></b><b style="--s:61;--l:1.280;background:#00d900"></b><b style="--s:68;--l:5.300;background:#5dd400">Re..</b></div>

<div class="r" style="top:821px"><b style="--s:5;--l:5;background:#ffa3a3">$Pr..</b><b style="--s:10;--l:1;background:#f7ad45"></b><b style="--s:11;--l:1;background:#ffa3a3"></b><b style="--s:12;--l:5;background:#ff99ff">Def..</b><b style="--s:17;--l:8;background:#f0a68f">Lambda..</b><b style="--s:25;--l:2;background:#4dc4ff"></b><b style="--s:27;--l:5;background:#f0a68f">La..</b><b style="--s:32;--l:1;background:#4dc4ff"></b><b style="--s:33;--l:12.200;background:#ffa3a3">DefaultSqlS..</b><b style="--s:51;--l:1;background:#d4bb00"></b><b style="--s:52;--l:1.280;background:#a3c0b8"></b><b style="--s:61;--l:1.280;background:#ffa3a3"></b><b style="--s:68;--l:5.300;background:#deadd1">Re..</b></div>

<div class="r" style="top:848px"><b style="--s:5;--l:5;background:#ff99ff">Plu..</b><b style="--s:10;--l:1;background:#ffaa00"></b><b style="--s:11;--l:1;background:#8fbaff"></b><b style="--s:12;--l:5;background:#ffa3a3">Def..</b><b style="--s:17;--l:8;background:#ff99ff">DefaultS..</b><b style="--s:25;--l:2;background:#ffa3a3"></b><b style="--s:27;--l:5;background:#ff99ff">Def..</b><b style="--s:32;--l:1;background:#ffa3a3"></b><b style="--s:33;--l:12.200;background:#ff99ff">DefaultSqlS..</b><b style="--s:51;--l:1.280;background:#1adb1a"></b><b style="--s:61;--l:1.280;background:#8fbaff"></b><b style="--s:68;--l:5.300;background:#b3b3ff">Oki..</b></div>

<!-- right panel -->
<div class="a" style="left:1499px;top:117px;width:1px;height:755px;background:#e8e9ee"></div>
<div class="a" style="left:1512px;top:122px;width:42px;height:28px;border:1px solid #e6e7ec;background:#fafbfc;text-align:center;font-size:14px;line-height:26px;color:#444">维度</div>
<div class="a" style="left:1553px;top:122px;width:120px;height:28px;border:1px solid #e6e7ec;border-radius:2px;padding-left:9px;font:12px/27px 'DejaVu Sans',sans-serif;color:#50535f">method</div>
<svg class="a" style="left:1652px;top:133px" width="10" height="7" fill="none" stroke="#778" stroke-width="1.100"><path d="M1 1l4 4 4-4"/></svg>
<div class="a" style="left:1814px;top:128px;width:48px;text-align:right;white-space:nowrap;line-height:16px;color:#444">执行占比</div>

<div class="l" style="top:153px"><em></em><span>HashMap.getNode(Object)</span><s>80 ms</s><i style="--w:3px"></i></div>
<div class="l" style="top:189px"><em></em><span>.__write()</span><s>50.00 ms</s><i style="--w:2px"></i></div>
<div class="l" style="top:225px"><em></em><span>.__pthread_cond_timedwait()</span><s>50.00 ms</s><i style="--w:2px"></i></div>
<div class="l" style="top:261px"><em></em><span>.poll()</span><s>30 ms</s><i></i></div>
<div class="l" style="top:297px"><em></em><span>HashMap.putVal(int, Object, ...</span><s>30 ms</s><i></i></div>
<div class="l" style="top:333px"><em></em><span>.JfrTypeSet::serialize()</span><s>30 ms</s><i></i></div>
<div class="l" style="top:369px"><em></em><span>String.equals(Object)</span><s>20 ms</s><i></i></div>
<div class="l" style="top:405px"><em></em><span>AbstractQueuedSynchronizer....</span><s>20 ms</s><i></i></div>
<div class="l" style="top:441px"><em></em><span>.vframeStreamForte::forte_ne...</span><s>20 ms</s><i></i></div>
<div class="l" style="top:477px"><em></em><span>.itable stub()</span><s>20 ms</s><i></i></div>
<div class="l" style="top:513px"><em></em><span>AbstractQueuedSynchronizer....</span><s>20 ms</s><i></i></div>
<div class="l" style="top:549px"><em></em><span>ErrorPacket.&lt;init&gt;(ReadableB...</span><s>10 ms</s><i></i></div>
<div class="l" style="top:585px"><em></em><span>DefaultResultSetHandler.getR...</span><s>10 ms</s><i></i></div>
<div class="l" style="top:621px"><em></em><span>SignedIntColumn.defaultClas...</span><s>10 ms</s><i></i></div>
<div class="l" style="top:657px"><em></em><span>Collectors$$Lambda.0x00007...</span><s>10 ms</s><i></i></div>
<div class="l" style="top:693px"><em></em><span>StringLatin1.hashCode(byte[])</span><s>10 ms</s><i></i></div>
<div class="l" style="top:729px"><em></em><span>ReentrantLock$Sync.tryRelea...</span><s>10 ms</s><i></i></div>
<div class="l" style="top:765px"><em></em><span>.Symbol::as_unicode()</span><s>10 ms</s><i></i></div>
<div class="l" style="top:801px"><em></em><span>.AccessInternal::PostRuntime...</span><s>10 ms</s><i></i></div>
<div class="l" style="top:837px"><em></em><span>IOVecWrapper.setBuffer(int, ...</span><s>10 ms</s><i></i></div>

<!-- annotations -->
<svg class="a" style="left:0;top:0" width="1877" height="872" fill="none">
<rect x="509" y="2" width="64" height="33" stroke="#ee1c25" stroke-width="4.500" rx="1"/>
<rect x="19" y="283" width="135" height="30" stroke="#ee1c25" stroke-width="4.500" rx="1"/>
<rect x="1798" y="-2" width="30" height="36" stroke="#ee1c25" stroke-width="4.500" rx="1"/>
<path d="M517 42L497 43.500 501 49.500 441 81.500 443 85 504 53 505.500 58z" fill="#ee1c25"/>
<path d="M157 282L162.500 261 167 264.500 256.500 164 259.500 166.500 171 269 175 273z" fill="#ee1c25"/>
<path d="M1795 33L1775 36.500 1778.500 41.500 1742 66 1744 69.500 1781 45.500 1784.500 50z" fill="#ee1c25"/>
</svg>
<div class="a" style="left:1675px;top:73px;font:24px/36px 'Noto Sans CJK SC','Liberation Sans',sans-serif;color:#ee1c25;white-space:nowrap">下载JFR文件</div>
</body></html>
